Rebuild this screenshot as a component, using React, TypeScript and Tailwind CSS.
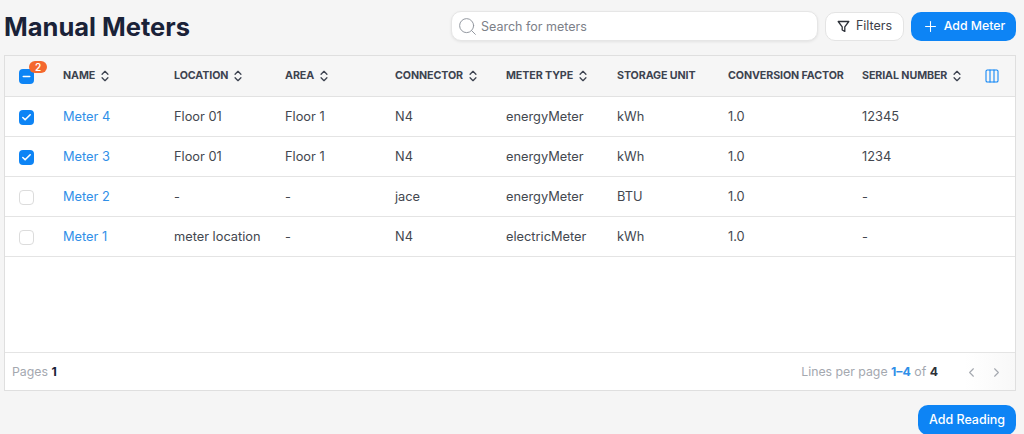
import { Search, Plus, ChevronLeft, ChevronRight, ChevronsUpDown, Columns3, Check, Minus } from 'lucide-react'

const cols = 'grid grid-cols-[58px_111px_111px_110px_111px_111px_111px_134px_110px_1fr] items-center'

interface Meter {
  name: string
  location: string
  area: string
  connector: string
  type: string
  unit: string
  factor: string
  serial: string
  checked: boolean
}

const meters: Meter[] = [
  { name: 'Meter 4', location: 'Floor 01', area: 'Floor 1', connector: 'N4', type: 'energyMeter', unit: 'kWh', factor: '1.0', serial: '12345', checked: true },
  { name: 'Meter 3', location: 'Floor 01', area: 'Floor 1', connector: 'N4', type: 'energyMeter', unit: 'kWh', factor: '1.0', serial: '1234', checked: true },
  { name: 'Meter 2', location: '-', area: '-', connector: 'jace', type: 'energyMeter', unit: 'BTU', factor: '1.0', serial: '-', checked: false },
  { name: 'Meter 1', location: 'meter location', area: '-', connector: 'N4', type: 'electricMeter', unit: 'kWh', factor: '1.0', serial: '-', checked: false },
]

const headers = [
  { label: 'NAME', sort: true },
  { label: 'LOCATION', sort: true },
  { label: 'AREA', sort: true },
  { label: 'CONNECTOR', sort: true },
  { label: 'METER TYPE', sort: true },
  { label: 'STORAGE UNIT', sort: false },
  { label: 'CONVERSION FACTOR', sort: false },
  { label: 'SERIAL NUMBER', sort: true },
]

function Checkbox({ checked }: { checked: boolean }) {
  if (checked) {
    return (
      <div className="ml-[14px] flex h-[15px] w-[15px] items-center justify-center rounded-[4px] bg-[#0d84f5]">
        <Check size={11} strokeWidth={3.5} className="text-white" />
      </div>
    )
  }
  return <div className="ml-[14px] h-[15px] w-[15px] rounded-[4px] border border-[#dcdcdc] bg-white" />
}

export default function App() {
  return (
    <div className="h-[434px] w-[1024px] overflow-hidden bg-[#f5f5f5] pl-1 pr-2 font-['Inter','Liberation_Sans',sans-serif]">
      <div className="flex h-[55px] items-center">
        <h1 className="text-[25.5px] font-bold text-[#1a2238]">Manual Meters</h1>
        <div className="mb-[3px] ml-auto flex items-center">
          <div className="flex h-[30px] w-[367px] items-center gap-[3px] rounded-[10px] border border-[#e6e6e6] bg-white pl-[5px] shadow-[0_1px_3px_rgba(0,0,0,0.08)]">
            <Search size={21} strokeWidth={1.1} className="text-[#8f949c]" />
            <span className="pt-[2px] text-[12.5px] text-[#7c8088]">Search for meters</span>
          </div>
          <button className="ml-[7px] flex h-[29px] w-[79px] items-center justify-center gap-[6px] rounded-[10px] border border-[#e4e4e4] bg-white text-[12.5px] text-[#3c4048]">
            <svg width="13" height="13" viewBox="0 0 13 13" fill="none" stroke="#2c3038" strokeWidth="1.3" strokeLinejoin="round">
              <path d="M1.2 1.5h10.6L7.8 6.8v4.6L5.2 10V6.8z" />
            </svg>
            Filters
          </button>
          <button className="ml-[7px] flex h-[29px] w-[105px] items-center justify-center gap-[5px] rounded-[10px] bg-[#0d84f5] text-[12.3px] font-medium text-white">
            <Plus size={17} strokeWidth={1.5} />
            Add Meter
          </button>
        </div>
      </div>

      <div className="flex h-[336px] flex-col border border-[#dfdfdf] bg-white">
        <div className={`${cols} h-[41px] border-b border-[#e2e2e2] bg-[#f6f6f6]`}>
          <div className="relative">
            <div className="ml-[14px] flex h-[15px] w-[15px] items-center justify-center rounded-[4px] bg-[#0d84f5]">
              <Minus size={11} strokeWidth={3.5} className="text-white" />
            </div>
            <span className="absolute left-[24px] top-[-8px] flex h-[12px] w-[18px] items-center justify-center rounded-full bg-[#f4682d] text-[10px] font-semibold leading-none text-white">
              2
            </span>
          </div>
          {headers.map((h) => (
            <div key={h.label} className="flex items-center gap-[3px] whitespace-nowrap text-[10.7px] font-bold tracking-[-0.1px] text-[#3d4350]">
              {h.label}
              {h.sort && <ChevronsUpDown size={14} strokeWidth={2.25} className="text-[#3d4350]" />}
            </div>
          ))}
          <div className="flex justify-end pr-[15px]">
            <Columns3 size={16} strokeWidth={1.6} className="text-[#0d84f5]" />
          </div>
        </div>

        {meters.map((m) => (
          <div key={m.name} className={`${cols} h-[40px] border-b border-[#e4e4e4] pt-[1px] text-[12.8px] text-[#43474f]`}>
            <Checkbox checked={m.checked} />
            <span className="text-[#2f8fe8]">{m.name}</span>
            <span>{m.location}</span>
            <span>{m.area}</span>
            <span>{m.connector}</span>
            <span>{m.type}</span>
            <span>{m.unit}</span>
            <span>{m.factor}</span>
            <span>{m.serial}</span>
          </div>
        ))}

        <div className="mt-auto flex h-[38px] items-center justify-between border-t border-[#e4e4e4] bg-gradient-to-r from-white from-[95%] to-[#f8f8f8] pl-[7px] pt-[2px] text-[12.3px] text-[#a4a8af]">
          <div>
            Pages <span className="font-bold text-[#1a2238]">1</span>
          </div>
          <div className="flex items-center">
            <span>
              Lines per page <span className="font-bold text-[#2f8fe8]">1–4</span> of{' '}
              <span className="font-bold text-[#2c3038]">4</span>
            </span>
            <ChevronLeft size={15} strokeWidth={1.75} className="ml-[26px] text-[#a4a8af]" />
            <ChevronRight size={15} strokeWidth={1.75} className="ml-[10px] mr-[11px] text-[#a4a8af]" />
          </div>
        </div>
      </div>

      <div className="mt-[14px] flex justify-end">
        <button className="h-[30px] w-[98px] rounded-[10px] bg-[#0d84f5] text-[12.5px] font-medium text-white">Add Reading</button>
      </div>
    </div>
  )
}
